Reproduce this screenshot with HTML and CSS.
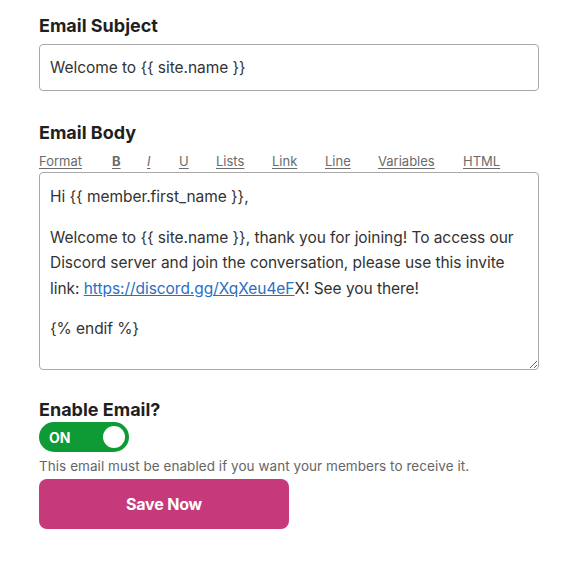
FILE: index.html
```html
<!DOCTYPE html>
<html lang="en">
<head>
<meta charset="utf-8">
<title>Email settings</title>
<link rel="stylesheet" href="styles.css">
</head>
<body>
<form class="form">
  <div class="field">
    <label class="label" for="subject">Email Subject</label>
    <input class="input" id="subject" type="text" value="Welcome to {{ site.name }}">
  </div>
  <div class="field field-body">
    <div class="label">Email Body</div>
    <div class="toolbar">
      <span class="tool">Format</span>
      <span class="tool tool-b">B</span>
      <span class="tool tool-i">I</span>
      <span class="tool tool-u">U</span>
      <span class="tool">Lists</span>
      <span class="tool">Link</span>
      <span class="tool">Line</span>
      <span class="tool">Variables</span>
      <span class="tool">HTML</span>
    </div>
    <div class="editor" contenteditable="true">
      <p>Hi {{ member.first_name }},</p>
      <p>Welcome to {{ site.name }}, thank you for joining! To access our Discord server and join the conversation, please use this invite link: <a href="#">https://discord.gg/XqXeu4eF</a>X! See you there!</p>
      <p>{% endif %}</p>
    </div>
  </div>
  <div class="field field-enable">
    <div class="label">Enable Email?</div>
    <div class="toggle"><span class="toggle-text">ON</span><span class="knob"></span></div>
    <div class="help">This email must be enabled if you want your members to receive it.</div>
    <button type="button" class="save">Save Now</button>
  </div>
</form>
</body>
</html>
```
FILE: styles.css
```css
* { box-sizing: border-box; }
html, body { margin: 0; background: #fff; }
body {
  font-family: Inter, "Noto Sans", sans-serif;
  color: #222;
  padding: 15px 35px 0 39px;
}
.form { width: 500px; display: flex; flex-direction: column; }
.field { display: flex; flex-direction: column; }
.label {
  font-size: 18px;
  font-weight: 700;
  color: #1f1f1f;
  line-height: 22px;
  letter-spacing: 0;
  margin-bottom: 7px;
}
.input {
  width: 500px;
  height: 47px;
  border: 1px solid #a9a9a9;
  border-radius: 4px;
  padding: 0 10px;
  font-family: inherit;
  font-size: 15.5px;
  letter-spacing: -0.05px;
  color: #333;
  outline: none;
}
.field-body { margin-top: 31px; }
.field-body .label { margin-bottom: 9px; }
.toolbar {
  display: flex;
  font-size: 13px;
  color: #6b6b6b;
  line-height: 16px;
  margin-bottom: 3px;
}
.tool { text-decoration: underline; text-underline-offset: 2px; }
.tool:nth-child(1) { width: 73px; }
.tool:nth-child(2) { width: 35px; }
.tool:nth-child(3) { width: 32px; }
.tool:nth-child(4) { width: 37px; }
.tool:nth-child(5) { width: 56px; }
.tool:nth-child(6) { width: 53px; }
.tool:nth-child(7) { width: 53px; }
.tool:nth-child(8) { width: 85px; }
.tool-b { font-weight: 700; }
.tool-i { font-style: italic; }
.editor {
  width: 500px;
  height: 198px;
  border: 1px solid #a9a9a9;
  border-radius: 4px;
  padding: 11px 10px;
  font-size: 15.5px;
  line-height: 25.5px;
  letter-spacing: -0.05px;
  color: #333;
  overflow: auto;
  resize: vertical;
  outline: none;
}
.editor p { margin: 0 0 15px; }
.editor a { color: #2a6fc0; text-decoration: underline; }
.field-enable { margin-top: 29px; }
.field-enable .label { margin-bottom: 1px; }
.toggle {
  width: 90px;
  height: 30px;
  border-radius: 15px;
  background: #0e9a34;
  display: flex;
  align-items: center;
  justify-content: space-between;
  padding: 0 4px 0 10px;
}
.toggle-text { color: #fff; font-weight: 700; font-size: 14px; }
.knob { width: 22px; height: 22px; border-radius: 50%; background: #fff; }
.help {
  font-size: 13.5px;
  color: #666;
  margin-top: 6px;
  line-height: 16px;
  letter-spacing: 0.05px;
}
.save {
  margin-top: 5px;
  width: 250px;
  height: 50px;
  border: 0;
  border-radius: 8px;
  background: #c63a7c;
  color: #fff;
  font-family: inherit;
  font-size: 16px;
  font-weight: 700;
  letter-spacing: -0.2px;
}
```
